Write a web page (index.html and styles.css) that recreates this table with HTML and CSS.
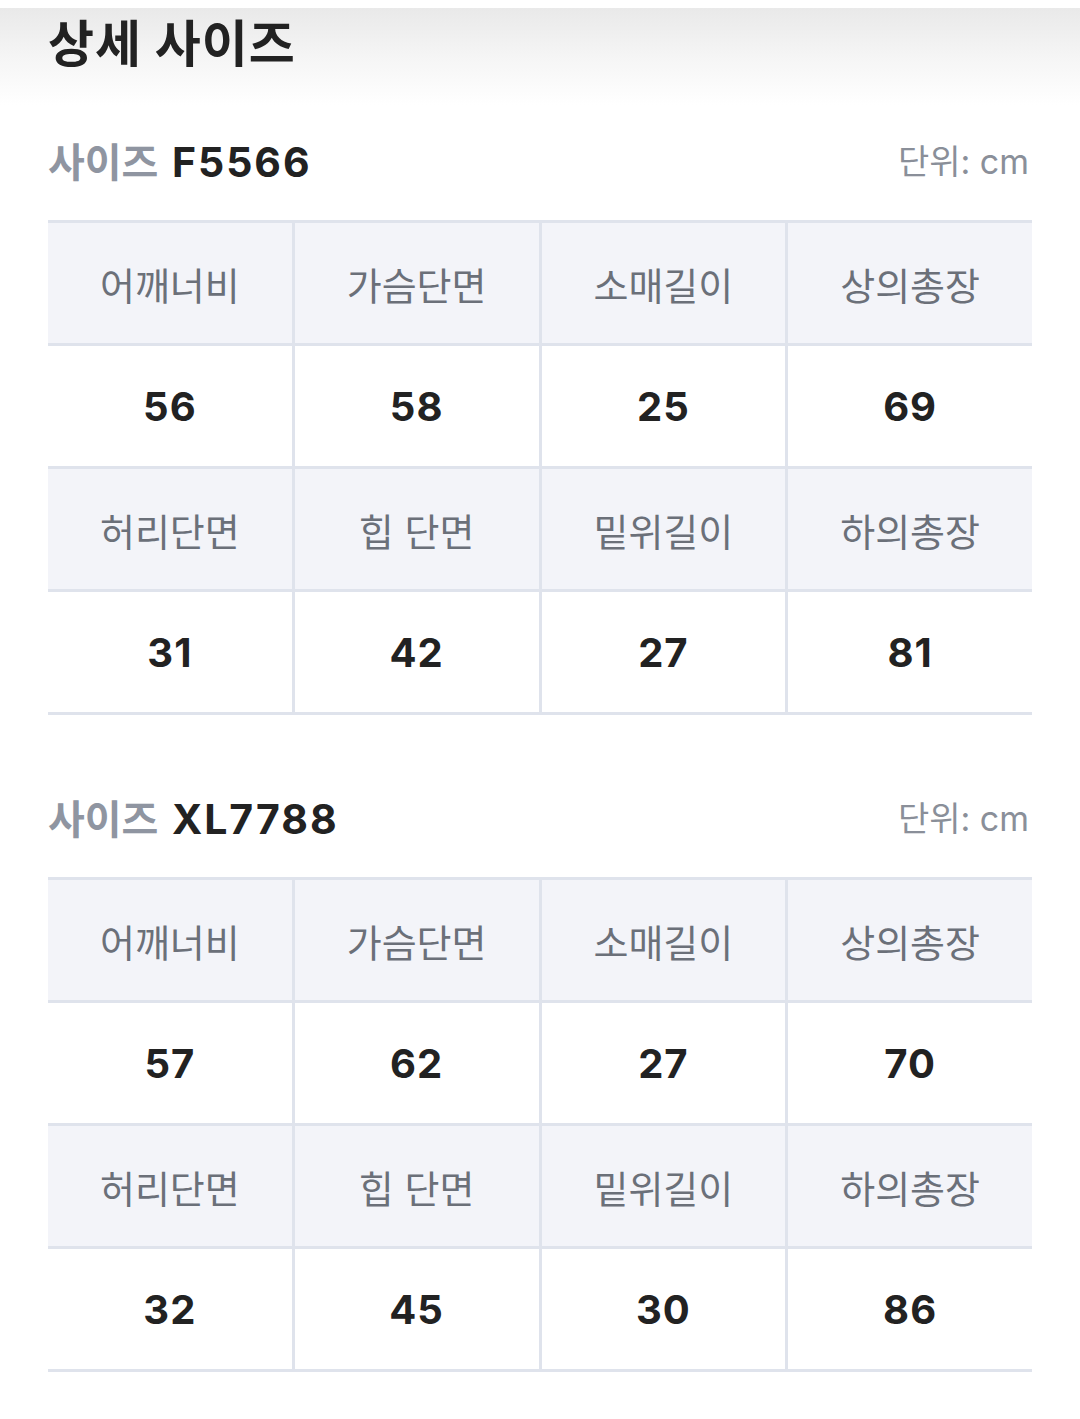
FILE: index.html
```html
<!DOCTYPE html>
<html lang="ko">
<head>
<meta charset="utf-8">
<link rel="stylesheet" href="styles.css">
</head>
<body>
<header class="band">
  <h1 class="title">상세 사이즈</h1>
</header>

<section class="size-block">
  <div class="size-head">
    <h2 class="size-name"><span class="label">사이즈</span> <span class="code">F5566</span></h2>
    <span class="unit">단위: cm</span>
  </div>
  <div class="grid">
    <div class="cell th">어깨너비</div>
    <div class="cell th">가슴단면</div>
    <div class="cell th">소매길이</div>
    <div class="cell th">상의총장</div>
    <div class="cell td">56</div>
    <div class="cell td">58</div>
    <div class="cell td">25</div>
    <div class="cell td">69</div>
    <div class="cell th">허리단면</div>
    <div class="cell th">힙 단면</div>
    <div class="cell th">밑위길이</div>
    <div class="cell th">하의총장</div>
    <div class="cell td">31</div>
    <div class="cell td">42</div>
    <div class="cell td">27</div>
    <div class="cell td">81</div>
  </div>
</section>

<section class="size-block">
  <div class="size-head">
    <h2 class="size-name"><span class="label">사이즈</span> <span class="code">XL7788</span></h2>
    <span class="unit">단위: cm</span>
  </div>
  <div class="grid">
    <div class="cell th">어깨너비</div>
    <div class="cell th">가슴단면</div>
    <div class="cell th">소매길이</div>
    <div class="cell th">상의총장</div>
    <div class="cell td">57</div>
    <div class="cell td">62</div>
    <div class="cell td">27</div>
    <div class="cell td">70</div>
    <div class="cell th">허리단면</div>
    <div class="cell th">힙 단면</div>
    <div class="cell th">밑위길이</div>
    <div class="cell th">하의총장</div>
    <div class="cell td">32</div>
    <div class="cell td">45</div>
    <div class="cell td">30</div>
    <div class="cell td">86</div>
  </div>
</section>
</body>
</html>
```

FILE: styles.css
```css
html, body {
  margin: 0;
  padding: 0;
  background: #ffffff;
}

body {
  font-family: Inter, "Noto Sans CJK KR", sans-serif;
  color: #222222;
}

.band {
  margin-top: 8px;
  height: 97px;
  background: linear-gradient(to bottom, #e9e9e9 0%, #f6f6f6 55%, #ffffff 100%);
  padding: 0 48px;
  box-sizing: border-box;
}

.title {
  margin: 0;
  padding-top: 11px;
  font-size: 50px;
  line-height: 50px;
  font-weight: 700;
  color: #222222;
  letter-spacing: 1px;
}

.size-block {
  padding: 29px 48px 0;
  margin-bottom: 47px;
}

.size-head {
  display: flex;
  justify-content: space-between;
  align-items: center;
  height: 56px;
  margin-bottom: 30px;
}

.size-name {
  margin: 0;
  font-size: 40px;
  font-weight: 700;
  line-height: 56px;
  word-spacing: 4px;
}

.size-name .label {
  color: #8f95a1;
}

.size-name .code {
  color: #222222;
  font-size: 41px;
  letter-spacing: 2px;
}

.unit {
  font-size: 34px;
  line-height: 50px;
  color: #8a8f99;
  font-weight: 400;
  padding-right: 3px;
  margin-top: 0;
}

.grid {
  display: grid;
  grid-template-columns: repeat(4, 1fr);
  grid-auto-rows: 120px;
  gap: 3px;
  background: #dfe3ec;
  border-top: 3px solid #dfe3ec;
  border-bottom: 3px solid #dfe3ec;
}

.cell {
  display: flex;
  align-items: center;
  justify-content: center;
}

.th {
  background: #f3f4f9;
  font-size: 38px;
  color: #6b7079;
  font-weight: 400;
}

.td {
  background: #ffffff;
  font-size: 40px;
  font-weight: 700;
  color: #222222;
  letter-spacing: 1px;
}
```
